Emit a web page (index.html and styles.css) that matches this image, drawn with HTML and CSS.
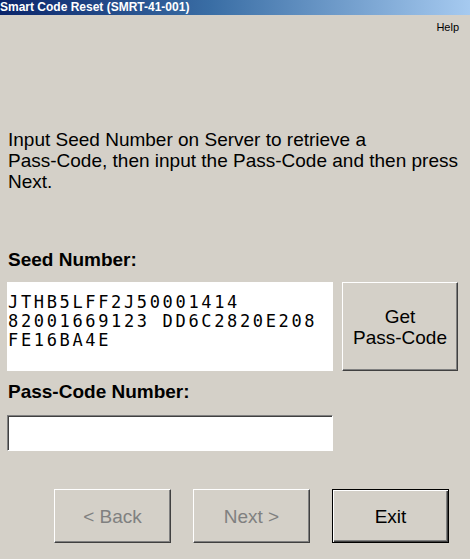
FILE: index.html
```html
<!DOCTYPE html>
<html>
<head>
<meta charset="utf-8">
<link rel="stylesheet" href="styles.css">
</head>
<body>
<div class="window">
  <div class="titlebar">Smart Code Reset (SMRT-41-001)</div>
  <div class="menubar"><span class="menu-item">Help</span></div>
  <main class="content">
    <p class="intro">Input Seed Number on Server to retrieve a<br>Pass-Code, then input the Pass-Code and then press<br>Next.</p>
    <div class="field-label seed-label">Seed Number:</div>
    <div class="seed-row">
      <div class="seed-box">JTHB5LFF2J50001414<br>82001669123 DD6C2820E208<br>FE16BA4E</div>
      <button class="btn get-btn">Get<br>Pass-Code</button>
    </div>
    <div class="field-label pass-label">Pass-Code Number:</div>
    <div class="pass-input"></div>
    <div class="actions">
      <button class="btn nav-btn disabled">&lt; Back</button>
      <button class="btn nav-btn disabled">Next &gt;</button>
      <button class="btn nav-btn default">Exit</button>
    </div>
  </main>
</div>
</body>
</html>
```

FILE: styles.css
```css
html, body {
  margin: 0;
  padding: 0;
}
body {
  width: 470px;
  height: 559px;
  background: #d4d0c8;
  font-family: "Liberation Sans", Arial, sans-serif;
  color: #000;
  overflow: hidden;
}
.window {
  display: flex;
  flex-direction: column;
  height: 559px;
}
.titlebar {
  height: 15px;
  line-height: 15px;
  background: linear-gradient(to right, #0a246a 0%, #3a6ea5 45%, #a6caf0 100%);
  color: #fff;
  font-weight: bold;
  font-size: 12px;
  padding-left: 0;
  white-space: nowrap;
}
.menubar {
  display: flex;
  justify-content: flex-end;
  padding: 6px 11px 0 0;
}
.menu-item {
  font-size: 11px;
  line-height: 13px;
}
.content {
  padding-left: 7px;
  display: flex;
  flex-direction: column;
}
.intro {
  margin: 95px 0 0 0;
  padding-left: 1px;
  font-size: 19px;
  line-height: 21px;
  white-space: nowrap;
}
.field-label {
  font-weight: bold;
  font-size: 19px;
  line-height: 21px;
  padding-left: 1px;
}
.seed-label {
  margin-top: 57px;
}
.seed-row {
  display: flex;
  gap: 9px;
  margin-top: 12px;
  height: 89px;
}
.seed-box {
  width: 326px;
  background: #fff;
  padding: 11px 0 0 1px;
  box-sizing: border-box;
  font-family: "DejaVu Sans Mono", monospace;
  font-size: 17px;
  line-height: 19px;
  letter-spacing: 2.65px;
  white-space: nowrap;
  overflow: hidden;
}
.btn {
  font-family: "Liberation Sans", Arial, sans-serif;
  font-size: 19px;
  line-height: 21px;
  color: #000;
  background: #d4d0c8;
  border-style: solid;
  border-width: 1px;
  border-color: #ffffff #404040 #404040 #ffffff;
  box-shadow: inset -1px -1px 0 #808080;
  padding: 0;
  margin: 0;
  box-sizing: border-box;
}
.get-btn {
  width: 116px;
  height: 89px;
}
.pass-label {
  margin-top: 10px;
}
.pass-input {
  margin-top: 13px;
  width: 326px;
  height: 36px;
  box-sizing: border-box;
  background: #fff;
  border-style: solid;
  border-width: 1px;
  border-color: #808080 #ffffff #ffffff #808080;
  box-shadow: inset 1px 1px 0 #404040;
}
.actions {
  display: flex;
  gap: 22px;
  margin-top: 38px;
  padding-left: 47px;
}
.nav-btn {
  width: 117px;
  height: 54px;
}
.nav-btn.disabled {
  color: #808080;
}
.nav-btn.default {
  border: 1px solid #000;
  box-shadow: inset 1px 1px 0 #ffffff, inset -1px -1px 0 #404040, inset -2px -2px 0 #808080;
}
```
